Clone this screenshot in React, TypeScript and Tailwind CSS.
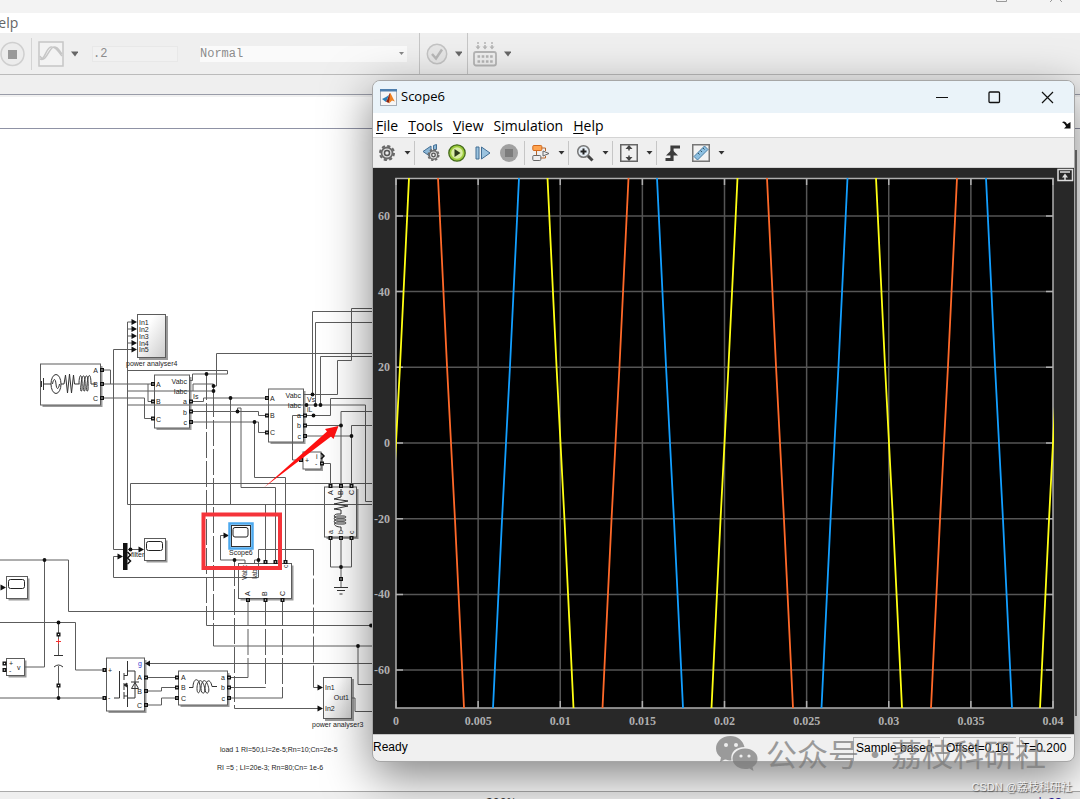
import React from 'react';

type Point = [number, number];

// polylines of the model, in canvas coordinates
const wires: string[] = [
  'M132 322H127.5V504.5H372', 'M127.5 329H132M127.5 336H132M127.5 343H132', 'M132 349.5H113.5V549.5H124',
  'M127.5 370.5H227.5V374H192.5V380.5H190', 'M102 370H110.5V384', 'M102 384H152', 'M148 384V401.5H152',
  'M102 398H144.5V418.5H152', 'M127.5 391H213.5V384H193V391', 'M190 401.5H203.5V398H266',
  'M127.5 405H365.5V501.5H372', 'M190 411.5H258.5V415.5H266', 'M190 422H258.5V432.5H266',
  'M213.5 386H216.5V353.5H372', 'M230.5 398V504.5', 'M237.5 411.5V408H241V487.5H275.5V560',
  'M254.5 422V477.5H285.5V560', 'M304 394.5H337.5V360.5H351.5V308.5H372', 'M312.5 394.5V311.5H372',
  'M315.5 405V322.5H372', 'M320.5 405V356.5H372', 'M304 415.5H330.5V398.5H372', 'M304 425.5H341V411.5H372',
  'M304 436H351.5V425.5H372', 'M341 425.5V486', 'M351.5 436V486', 'M304 415.5H292.5V460H300',
  'M322 463.5H330.5V486', 'M130.5 549.5V483.5H372', 'M265.5 504.5V560', 'M330.5 538V567H351.5V538M341 538V587',
  'M225 535.5H220.5V560H245V564', 'M254.5 564V560H258.5V549.5H313.5', 'M258.5 560V577.5H113.5V556.5H120',
  'M128 549.5H140', 'M0 560H68.5V611.5H372', 'M44.5 560V667H24', 'M0 622.5H75.5V670H104', 'M0 698H104',
  'M58.5 622.5V655M58.5 666V698', 'M150 663.5H372', 'M146 677.5H177', 'M146 691H161.5V687.5H177',
  'M146 705H161.5V698H177', 'M352 698H355V711.5H372', 'M206.5 625.5H372', 'M213.5 646H372', 'M358 646V684.5H372',
  'M234.5 708.5H318', 'M229 677.5H248', 'M229 687.5H265.5', 'M229 698H282.5', 'M313.5 687.5H318',
];

const brokenWires: string[] = [
  'M206.5 374V625.5', 'M213.5 391V646', 'M234.5 560V708.5', 'M313.5 549.5V687.5',
  'M248 600V677.5', 'M265.5 600V687.5', 'M282.5 600V698',
];

const dots: Point[] = [
  [206.5, 374], [213.5, 386], [213.5, 391], [230.5, 398], [237.5, 411.5], [254.5, 422], [312.5, 394.5],
  [306.5, 405], [315.5, 405], [320.5, 405], [313.5, 415.5], [341, 425.5], [351.5, 436], [130.5, 549.5],
  [234.5, 560], [258.5, 560], [44.5, 560], [58.5, 622.5], [58.5, 698], [341, 567], [358, 646], [371, 625.5],
];

const ports: Point[] = [
  [102, 370], [102, 384], [102, 398], [153, 384], [153, 401.5], [153, 418.5],
  [191, 401.5], [191, 411.5], [191, 422], [267, 398], [267, 415.5], [267, 432.5],
  [305, 415.5], [305, 425.5], [305, 436], [301, 460], [322, 463.5],
  [330.5, 486], [341, 486], [351.5, 486], [330.5, 538], [341, 538], [351.5, 538], [341, 579],
  [265.5, 562], [275.5, 562], [285.5, 562], [248, 600], [265.5, 600], [282.5, 600],
  [58.5, 634.5], [58.5, 685.5], [4.5, 663.5], [4.5, 670], [104.5, 670], [104.5, 698],
  [146, 677.5], [146, 691], [146, 705], [177, 677.5], [177, 687.5], [177, 698],
  [229, 677.5], [229, 687.5], [229, 698],
];

const arrows: Point[] = [
  [137, 322], [137, 329], [137, 336], [137, 343], [137, 349.5], [144, 549.5], [123, 556.5],
  [6, 587.5], [229, 535.5], [323, 687.5], [323, 708.5],
];

// x, y, width, height
const blocks: [number, number, number, number][] = [
  [40.5, 364, 60, 41], [154.5, 375, 35, 53], [268.5, 389, 35, 53], [303, 452, 18, 17],
  [324.5, 487, 32, 50], [238.5, 563.5, 53, 35], [144.5, 538.5, 21, 22], [6.5, 576.5, 21, 22],
  [6.5, 658.5, 18, 17], [106.5, 658, 38, 53], [178.5, 671, 49, 34],
];

interface Label {
  x: number;
  y: number;
  text: string;
  end?: boolean;
  vertical?: boolean;
  color?: string;
}

const labels: Label[] = [
  { x: 139, y: 325, text: 'In1' }, { x: 139, y: 332, text: 'In2' }, { x: 139, y: 339, text: 'In3' },
  { x: 139, y: 346, text: 'In4' }, { x: 139, y: 352, text: 'In5' }, { x: 126, y: 366, text: 'power analyser4' },
  { x: 98, y: 373, text: 'A', end: true }, { x: 98, y: 387, text: 'B', end: true }, { x: 98, y: 401, text: 'C', end: true },
  { x: 156, y: 387, text: 'A' }, { x: 156, y: 404, text: 'B' }, { x: 156, y: 422, text: 'C' },
  { x: 187, y: 384, text: 'Vabc', end: true }, { x: 187, y: 394, text: 'Iabc', end: true },
  { x: 187, y: 404, text: 'a', end: true }, { x: 187, y: 415, text: 'b', end: true }, { x: 187, y: 425, text: 'c', end: true },
  { x: 193, y: 399, text: 'Is' },
  { x: 270, y: 401, text: 'A' }, { x: 270, y: 418, text: 'B' }, { x: 270, y: 435, text: 'C' },
  { x: 301, y: 398, text: 'Vabc', end: true }, { x: 301, y: 408, text: 'Iabc', end: true },
  { x: 301, y: 418, text: 'a', end: true }, { x: 301, y: 428, text: 'b', end: true }, { x: 301, y: 439, text: 'c', end: true },
  { x: 307, y: 402, text: 'Vs' }, { x: 307, y: 412, text: 'iL' },
  { x: 305, y: 463, text: '+' }, { x: 316, y: 459, text: 'i' }, { x: 315, y: 466, text: '-' },
  { x: 333, y: 495, text: 'A', vertical: true }, { x: 343, y: 495, text: 'B', vertical: true }, { x: 354, y: 495, text: 'C', vertical: true },
  { x: 333, y: 534, text: 'a', vertical: true }, { x: 343, y: 534, text: 'b', vertical: true }, { x: 354, y: 534, text: 'c', vertical: true },
  { x: 247, y: 580, text: 'Vabc', vertical: true }, { x: 257, y: 579, text: 'Iabc', vertical: true }, { x: 288, y: 568, text: 'c', vertical: true },
  { x: 250, y: 596, text: 'A', vertical: true }, { x: 267, y: 596, text: 'B', vertical: true }, { x: 285, y: 596, text: 'C', vertical: true },
  { x: 229, y: 555, text: 'Scope6' }, { x: 131, y: 557, text: 'filter' },
  { x: 9, y: 666, text: '+' }, { x: 9, y: 673, text: '-' }, { x: 17, y: 670, text: 'v' },
  { x: 108, y: 673, text: '+' }, { x: 108, y: 700, text: '-' }, { x: 142, y: 666, text: 'g', end: true, color: '#3a3ad0' },
  { x: 142, y: 680, text: 'A', end: true }, { x: 142, y: 694, text: 'B', end: true }, { x: 142, y: 708, text: 'C', end: true },
  { x: 181, y: 680, text: 'A' }, { x: 181, y: 690, text: 'B' }, { x: 181, y: 701, text: 'C' },
  { x: 225, y: 680, text: 'a', end: true }, { x: 225, y: 690, text: 'b', end: true }, { x: 225, y: 701, text: 'c', end: true },
  { x: 325, y: 690, text: 'In1' }, { x: 325, y: 711, text: 'In2' }, { x: 349, y: 700, text: 'Out1', end: true },
  { x: 312, y: 727, text: 'power analyser3' },
  { x: 220, y: 752, text: 'load 1 RI=50;LI=2e-5;Rn=10;Cn=2e-5' },
  { x: 217, y: 770, text: 'RI =5 ; LI=20e-3; Rn=80;Cn= 1e-6' },
];

const ModelDiagram = () => (
  <svg
    className="block shrink-0 font-['Liberation_Sans',sans-serif] text-[7px]"
    width="372" height="661" viewBox="0 130 372 661" fill="none" stroke="#5c5c5c"
    role="img" aria-label="Simulink model"
  >
    <defs>
      <linearGradient id="sub" x1="0" y1="0" x2="1" y2="1">
        <stop offset="0.3" stopColor="#fff" />
        <stop offset="1" stopColor="#ccc" />
      </linearGradient>
    </defs>
    <g fill="#9a9a9a" stroke="none">
      {blocks.map(([x, y, w, h]) => <rect key={`${x}-${y}`} x={x + 2} y={y + 2} width={w} height={h} />)}
      <rect x="139" y="316" width="29" height="44" />
      <rect x="325" y="679" width="29" height="42" />
    </g>
    <g fill="#fff">
      {blocks.map(([x, y, w, h]) => <rect key={`${x}-${y}`} x={x} y={y} width={w} height={h} />)}
    </g>
    <rect x="137.5" y="314.5" width="28" height="43" fill="url(#sub)" />
    <rect x="323.5" y="677.5" width="28" height="41" fill="url(#sub)" />

    {wires.map(d => <path key={d} d={d} />)}
    {brokenWires.map(d => <path key={d} d={d} strokeDasharray="26 3" />)}
    <g fill="#111" stroke="none">
      {dots.map(([x, y]) => <circle key={`${x}-${y}`} cx={x} cy={y} r="1.9" />)}
      {arrows.map(([x, y]) => <path key={`${x}-${y}`} d={`M${x} ${y}l-5.5 -3v6z`} />)}
      <path d="M145 663.5l5 -3v6z" />
      <rect x="123" y="543" width="4.5" height="27" />
    </g>
    <g fill="#fff" stroke="#111" strokeWidth="1.4">
      {ports.map(([x, y]) => <rect key={`${x}-${y}`} x={x - 1.3} y={y - 1.3} width="2.6" height="2.6" />)}
    </g>

    {/* three-phase source */}
    <g stroke="#333">
      <path d="M41.5 381v6M43.5 378v12M43.5 384H51" />
      <ellipse cx="56" cy="384" rx="5" ry="9.5" />
      <path d="M52.5 384c1 -6 3 -6 3.5 0s2.5 6 3.5 0M61 384h3l1.5 -9 2 18 2 -19 2 19 2 -18 1 9h5" />
      <path d="M79 384c0 -12 4 -12 3 6c-1 3 -2 0 -1 -5c1 -13 5 -13 4 5c-1 3 -2 0 -1 -5c1 -13 5 -13 4 5c-1 3 -2 0 -1 -5c1 -13 4 -12 4 -1h5" />
    </g>
    {/* series RL load */}
    <path stroke="#333" d="M341 489v8l-7 2 14 2 -14 3 14 2 -14 3 7 1v4h-3c-5 0 -5 4 0 4h5c4 0 4 -2 0 -2h-5c-5 0 -5 5 0 5h5c4 0 4 -2 0 -2h-5c-5 0 -5 5 0 5h5c4 0 4 -2 0 -2h-5c-5 0 -5 5 3 5v4" />
    <path stroke="#333" d="M334 587.5h14M337 590.5h8M339.5 594h3" />
    {/* capacitor */}
    <path stroke="#333" d="M54 655.5h9M54 667q4.5 -4 9 0" />
    <path stroke="#e33" d="M56 641.5h5M58.5 639v5" />
    {/* bridge */}
    <g stroke="#333">
      <path d="M114 698h5.5V671M124 673v7M124 683v7M124 692v7M124 675.5h3.5V661M124 685h3.5V697M124 696h3.5v11M127.5 671h7.5v27h-7.5M131.5 688.5h7l-3.5 -6zM131 682h8" />
      <path fill="#111" d="M124 685l3 -2v4z" />
    </g>
    {/* filter inductor */}
    <path stroke="#333" d="M189 687.5h4c0 -10 6 -10 7 -2s-3 10 -3 3s4 -12 7 -3s-3 10 -3 3s4 -12 7 -3s-3 10 -3 3s5 -12 7 -2h5" />
    <path stroke="#111" strokeWidth="1.5" d="M127.5 552l3 3 -3 3 3 3 -3 3M321 453l3 3 -3 3" />
    <rect x="8.5" y="579.5" width="16" height="9" rx="2" stroke="#222" />
    <rect x="146.5" y="541.5" width="16" height="9" rx="2" stroke="#222" />
    <rect x="229.5" y="523.5" width="23" height="25" fill="#fff" stroke="#4da9ee" strokeWidth="2.5" />
    <rect x="231.5" y="525.5" width="19" height="21" stroke="#333" />
    <rect x="233" y="527.5" width="15" height="9.5" rx="2" stroke="#222" />

    {labels.map(l => (
      <text
        key={`${l.text}-${l.x}-${l.y}`} x={l.x} y={l.y} fill={l.color || '#1c1c1c'} stroke="none"
        textAnchor={l.end ? 'end' : 'start'} transform={l.vertical ? `rotate(-90 ${l.x} ${l.y})` : undefined}
      >
        {l.text}
      </text>
    ))}

    <rect x="203.5" y="514.5" width="76.5" height="53.5" stroke="#f5343a" strokeWidth="4" />
    <path fill="#fe1010" stroke="none" d="M264 487.5L327 431.5L325 429L338.5 426L333.5 439L331 436.5Z" />
  </svg>
);

const plotLeft = 396;
const plotRight = 1053;
const zeroY = 443;
const xStep = (plotRight - plotLeft) / 8;
const yStep = 75.7;
const xTicks = ['0', '0.005', '0.01', '0.015', '0.02', '0.025', '0.03', '0.035', '0.04'];
const yTicks = [60, 40, 20, 0, -20, -40, -60];

// zero crossings of every phase inside the visible window
const traces = [
  { color: '#ffff13', rising: [396, 724.5, 1053], falling: [560.5, 889] },
  { color: '#139fff', rising: [506, 834.5], falling: [670, 999] },
  { color: '#ff6929', rising: [615.5, 944], falling: [451, 780] },
];

const ScopePlot = () => (
  <svg className="block w-full h-auto" viewBox="373 168 701 566" role="img" aria-label="Scope6 signals">
    <defs>
      <clipPath id="axes">
        <rect x={plotLeft} y="178" width={plotRight - plotLeft + 1} height="530" />
      </clipPath>
    </defs>
    <rect x="373" y="168" width="701" height="566" fill="#282828" />
    <rect x={plotLeft} y="178.5" width={plotRight - plotLeft} height="529.5" fill="#000" />
    <g stroke="#555" strokeWidth="1.5">
      {xTicks.slice(1, -1).map((t, i) => <path key={t} d={`M${plotLeft + xStep * (i + 1)} 178V708`} />)}
      {yTicks.map(t => <path key={t} d={`M${plotLeft} ${zeroY - (t / 20) * yStep}H${plotRight}`} />)}
    </g>
    <g stroke="#afafaf" strokeWidth="1.5" fill="none">
      <rect x={plotLeft} y="178.5" width={plotRight - plotLeft} height="529.5" />
      {xTicks.map((t, i) => <path key={t} d={`M${plotLeft + xStep * i} 178v7M${plotLeft + xStep * i} 708v-7`} />)}
      {yTicks.map(t => {
        const y = zeroY - (t / 20) * yStep;
        return <path key={t} d={`M${plotLeft} ${y}h7M${plotRight} ${y}h-7`} />;
      })}
    </g>
    <g clipPath="url(#axes)" fill="none" strokeWidth="1.8">
      {traces.map(t => (
        <g key={t.color} stroke={t.color}>
          {t.rising.map(x => <path key={x} d={`M${x - 13} 708L${x - 4} 520L${x + 4} 366L${x + 13} 178`} />)}
          {t.falling.map(x => <path key={x} d={`M${x - 13} 178L${x - 4} 366L${x + 4} 520L${x + 13} 708`} />)}
        </g>
      ))}
    </g>
    <g className="font-['Liberation_Serif',serif] text-[12px] font-bold" fill="#afafaf">
      {xTicks.map((t, i) => <text key={t} x={plotLeft + xStep * i} y="725" textAnchor="middle">{t}</text>)}
      {yTicks.map(t => <text key={t} x="390" y={zeroY - (t / 20) * yStep + 4} textAnchor="end">{t}</text>)}
    </g>
    <g stroke="#ddd" strokeWidth="1.5" fill="none">
      <rect x="1058" y="169.5" width="14.5" height="11" />
      <path d="M1060 172h10M1065 180v-4" />
      <path d="M1062 177.5l3 -4 3 4z" fill="#ddd" stroke="none" />
    </g>
  </svg>
);

const Caret = ({ label, wide }: { label: string; wide?: boolean }) => (
  <button aria-label={label} className={wide ? 'w-[7px] ml-[7px] shrink-0' : 'w-[7px] ml-2 shrink-0'}>
    <svg className="block" width="7" height="6" viewBox="0 0 7 6">
      <path d={wide ? 'M0 0.5h7.5L4 5.5z' : 'M0.5 1h6L3.5 4.5z'} fill={wide ? '#666' : '#333'} />
    </svg>
  </button>
);

const Sep = () => <div className="w-px h-6 ml-[3px] mr-[7px] bg-[#c6c6c6] shrink-0" />;

const Tool = ({ label, children }: { label: string; children: React.ReactNode }) => (
  <button aria-label={label} className="w-[18px] h-[18px] shrink-0">
    <svg className="block" width="18" height="18" viewBox="0 0 18 18" fill="none">{children}</svg>
  </button>
);

const ScopeToolbar = () => (
  <div className="flex items-center h-[31px] pl-[5px] bg-[#efefef] border-y border-[#d4d4d4] overflow-hidden">
    <Tool label="Configuration properties">
      <circle cx="9" cy="9" r="7" stroke="#6a6a6a" strokeWidth="2" strokeDasharray="3.2 2.3" />
      <circle cx="9" cy="9" r="5.5" fill="#ddd" stroke="#6a6a6a" strokeWidth="1.8" />
      <circle cx="9" cy="9" r="2.5" fill="#eee" stroke="#555" strokeWidth="1.5" />
    </Tool>
    <Caret label="Configuration options" />
    <Sep />
    <div className="flex gap-2">
      <Tool label="Step back options">
        <path d="M1 7.5L9 2v11z" fill="#8db7d6" stroke="#426e94" />
        <path d="M11.5 1.5l3 -1v5h-3z" fill="#8db7d6" stroke="#426e94" />
        <circle cx="11.5" cy="11" r="5.3" stroke="#6a6a6a" strokeWidth="1.6" strokeDasharray="2.4 1.7" />
        <circle cx="11.500" cy="11" r="4.2" fill="#ddd" stroke="#6a6a6a" strokeWidth="1.4" />
        <circle cx="11.5" cy="11" r="1.8" fill="#eee" stroke="#555" strokeWidth="1.3" />
      </Tool>
      <Tool label="Run">
        <circle cx="9" cy="9" r="8.2" fill="#9ccb3b" stroke="#456b1d" strokeWidth="1.3" />
        <circle cx="9" cy="9" r="5.8" fill="#d9eda4" />
        <path d="M6.5 5v8l6 -4z" fill="#2d3b1b" />
      </Tool>
      <Tool label="Step forward">
        <path d="M2 3h3v12H2z" fill="#9bc3df" stroke="#426e94" />
        <path d="M7.5 3v12L16 9z" fill="#9bc3df" stroke="#426e94" />
      </Tool>
      <Tool label="Stop">
        <circle cx="9" cy="9" r="9" fill="#a0a0a0" />
        <rect x="5" y="5" width="8" height="8" fill="#7c7c7c" />
      </Tool>
    </div>
    <div className="pl-[3px]"><Sep /></div>
    <Tool label="Highlight Simulink block">
      <path d="M4.5 6v6M10 4h3.500v3M9 14h4.500v-2" stroke="#b5652b" />
      <rect x="0.8" y="1.5" width="9" height="5" rx="1" fill="#ffa44f" stroke="#d2691e" />
      <rect x="0.8" y="11.5" width="8" height="5" rx="1" fill="#eee" stroke="#666" />
      <path d="M11 7l6 2.5 -6 2.5z" fill="#eee" stroke="#666" />
    </Tool>
    <Caret label="Highlight options" />
    <Sep />
    <Tool label="Zoom">
      <path d="M11.5 11.5L16.5 16.5" stroke="#444" strokeWidth="3" />
      <circle cx="7.5" cy="7.5" r="5.8" fill="#e5edf4" stroke="#777" strokeWidth="1.5" />
      <path d="M4.5 7.5h6M7.5 4.5v6" stroke="#222" strokeWidth="2" />
    </Tool>
    <Caret label="Zoom options" />
    <Sep />
    <Tool label="Scale axes">
      <rect x="0.75" y="0.75" width="16.5" height="16.5" fill="#f0f0f0" stroke="#666" strokeWidth="1.5" />
      <path d="M9 1l3.5 4h-7zM9 17l3.5 -4h-7z" fill="#444" />
      <path d="M9 4v2.5M9 11.500v2.500" stroke="#444" strokeWidth="1.5" />
    </Tool>
    <Caret label="Scale options" />
    <Sep />
    <Tool label="Triggers">
      <path d="M1.500 15.5h6.500V3H16" stroke="#3c3c3c" strokeWidth="3.2" />
      <path d="M2 11.500h12L8 5.5z" fill="#3c3c3c" />
    </Tool>
    <div className="w-[10px] shrink-0" />
    <Tool label="Cursor measurements">
      <rect x="0.75" y="0.75" width="16.5" height="16.5" fill="#f2f2f2" stroke="#777" strokeWidth="1.5" />
      <path d="M2 12.5L12.5 2l3.5 3.5L5.5 16z" fill="#8dbfe0" stroke="#4a7fa5" />
      <path d="M6 9l1.5 1.5M8.5 6.5L10 8M11 4l1.5 1.5" stroke="#356" />
    </Tool>
    <Caret label="Measurement options" />
  </div>
);

const scopeMenu = [
  { before: '', key: 'F', after: 'ile' },
  { before: '', key: 'T', after: 'ools' },
  { before: '', key: 'V', after: 'iew' },
  { before: 'S', key: 'i', after: 'mulation' },
  { before: '', key: 'H', after: 'elp' },
];

const ScopeWindow = () => (
  <section className="absolute top-20 left-[372px] right-[5px] rounded-lg border border-[#a6a6a6] overflow-hidden shadow-[0_14px_48px_rgba(0,0,0,0.5)] bg-[#f0f0f0] text-black">
    <header className="flex items-center h-8 pl-[7px] pr-5 bg-[#eaf3f9] font-['Open_Sans',sans-serif]">
      <svg width="17" height="17" viewBox="0 0 17 17" className="shrink-0">
        <rect x="0.5" y="0.5" width="16" height="16" fill="#f6f6f6" stroke="#a5aeb8" />
        <path d="M0 0h17v2.5H0z" fill="#4e7fae" />
        <path d="M2 10l4 -2 3 -2 -3 7z" fill="#2c7fb8" />
        <path d="M6 12.5c2 -2 3 -8 4 -8.5l1.5 4 -3 6z" fill="#8e2411" />
        <path d="M10 4c1.5 1 3 6 5 8.5l-3 -1 -3 3z" fill="#ee8022" />
      </svg>
      <h1 className="ml-1 text-[13px]">Scope6</h1>
      <div className="flex gap-10 ml-auto">
        <button aria-label="Minimize"><svg className="block" width="13" height="13" stroke="#111"><path d="M1 6.5h12" /></svg></button>
        <button aria-label="Maximize"><svg className="block" width="13" height="13" fill="none" stroke="#111" strokeWidth="1.3"><rect x="1" y="1" width="10.5" height="10.5" rx="1" /></svg></button>
        <button aria-label="Close"><svg className="block" width="13" height="13" stroke="#111" strokeWidth="1.2"><path d="M1 1l11 11M12 1L1 12" /></svg></button>
      </div>
    </header>
    <nav className="flex items-center gap-[10px] h-6 px-[3px] bg-white font-['Open_Sans',sans-serif] text-[14px]">
      {scopeMenu.map(m => (
        <button key={m.key}>{m.before}<span className="underline underline-offset-2">{m.key}</span>{m.after}</button>
      ))}
      <button aria-label="Dock" className="ml-auto">
        <svg className="block" width="9" height="8" viewBox="0 0 9 8"><path d="M0 1.2c2 -1.500 4 -0.500 5 2L8.500 1v6.500H2l2 -2C3.500 3.500 2 2 0 1.200z" fill="#111" /></svg>
      </button>
    </nav>
    <ScopeToolbar />
    <ScopePlot />
    <footer className="flex items-end gap-[3px] h-[27px] pr-[3px] border-t border-[#c4c4c4] font-['Liberation_Sans',sans-serif] text-[12px] leading-[21px]">
      <span className="mr-auto h-6">Ready</span>
      <span className="px-[2px] w-[87px] h-6 border-t border-l border-[#b2b2b2]">Sample based</span>
      <span className="px-[2px] w-[73px] h-6 border-t border-l border-[#b2b2b2] whitespace-nowrap">Offset=0.16</span>
      <span className="px-[2px] w-[52px] h-6 border-t border-l border-[#b2b2b2] whitespace-nowrap">T=0.200</span>
    </footer>
  </section>
);

const ModelToolbar = () => (
  <div className="flex items-center shrink-0 h-[42px] bg-[#efefef] border-b border-[#bbb]">
    <button aria-label="Stop" className="shrink-0">
      <svg className="block" width="25" height="26" viewBox="0 0 25 26">
        <circle cx="12.5" cy="13" r="11.5" fill="#ececec" stroke="#cfcfcf" strokeWidth="1.5" />
        <rect x="8" y="9" width="9" height="9" fill="#999" />
      </svg>
    </button>
    <div className="w-px h-8 mx-[6px] bg-[#d4d4d4] shrink-0" />
    <button aria-label="Data inspector" className="shrink-0">
      <svg className="block" width="26" height="26" viewBox="0 0 26 26" fill="none" stroke="#c6c6c6">
        <rect x="1" y="1" width="24" height="24" fill="#f3f3f3" strokeWidth="1.5" />
        <path d="M2 15c4 8 6 -9 11 -9s6 3 11 9M2 18c7 3 9 -12 14 -12s5 4 8 7" strokeWidth="1.5" />
      </svg>
    </button>
    <Caret label="Data inspector options" wide />
    <input aria-label="Stop time" defaultValue=".2" className="w-[86px] h-4 ml-[14px] shrink-0 bg-[#f1f1f1] border border-[#e8e8e8] text-[#8c8c8c] text-[12px] font-['Liberation_Mono',monospace]" />
    <div className="relative ml-[22px] w-[207px] h-4 shrink-0">
      <select aria-label="Simulation mode" className="block appearance-none w-full h-full bg-[#fafafa] text-[#8c8c8c] text-[12px] leading-4 font-['Liberation_Mono',monospace]">
        <option>Normal</option>
      </select>
      <svg className="absolute right-[3px] top-[6px] pointer-events-none" width="5" height="4"><path d="M0 0h5L2.5 3z" fill="#888" /></svg>
    </div>
    <div className="w-px h-full ml-3 mr-[6px] bg-[#c6c6c6] shrink-0" />
    <button aria-label="Update diagram" className="shrink-0">
      <svg className="block" width="22" height="22" viewBox="0 0 22 22" fill="none">
        <circle cx="11" cy="11" r="9.7" fill="#e6e6e6" stroke="#c4c4c4" strokeWidth="1.5" />
        <path d="M6 11l4 4.5 6 -9" stroke="#b8b8b8" strokeWidth="2.5" />
      </svg>
    </button>
    <Caret label="Update options" wide />
    <div className="w-px h-full mx-[5px] bg-[#c6c6c6] shrink-0" />
    <button aria-label="Build model" className="shrink-0">
      <svg className="block" width="24" height="26" viewBox="0 0 24 26" fill="none" stroke="#b5b5b5">
        <rect x="1" y="11" width="22" height="13.5" rx="2" strokeWidth="1.8" />
        <path d="M4.5 15.5h16M4.5 20.5h16" strokeWidth="2.6" strokeDasharray="2.6 1.6" />
        <path d="M5 1v6M12 1v6M19 1v6" strokeWidth="1.5" strokeDasharray="2 1" />
        <path d="M2.5 5.5h5L5 8.500zM9.5 5.5h5L12 8.500zM16.5 5.5h5L19 8.500z" fill="#b5b5b5" stroke="none" />
      </svg>
    </button>
    <Caret label="Build options" wide />
  </div>
);

const Watermark = () => (
  <div className="absolute right-[34px] top-[730px] flex items-center gap-2 text-[#777] opacity-70 pointer-events-none font-['Noto_Sans_CJK_SC',sans-serif]">
    <svg width="43" height="35" viewBox="0 0 43 35" fill="#777">
      <path d="M15.5 0C6.5 0 1 6 1 12.5c0 4 2 7 5 9L5 26l5 -2.5c2 0.5 4 1 6.5 1C15 16 21 11 29.5 11C28 4.5 22.5 0 15.5 0z" />
      <path d="M30 12.5c-7 0 -12.5 4.5 -12.5 10s5.5 10.5 12.5 10.5c1.5 0 3 0 4.5 -0.5L38.5 35l-1 -4c3.5 -2 5 -5 5 -8.5c0 -5.5 -5.5 -10 -12.5 -10z" />
      <g fill="#eee"><circle cx="11" cy="9" r="2" /><circle cx="21" cy="9" r="2" /><circle cx="26" cy="20" r="1.6" /><circle cx="34" cy="20" r="1.6" /></g>
    </svg>
    <p className="flex text-[31px] leading-[46px] whitespace-nowrap">
      <span>公众号</span>
      <span className="w-8 text-center">·</span>
      <span>荔枝科研社</span>
    </p>
  </div>
);

const App: React.FC = () => {
  return (
    <main className="relative flex flex-col h-screen overflow-hidden bg-white font-['Open_Sans',sans-serif]">
      <div className="flex justify-end items-start gap-[42px] shrink-0 h-[13px] pr-[18px] bg-[#f3f3f3]">
        <svg width="12" height="3" fill="none" stroke="#999"><path d="M0.5 0v1.500h10V0" /></svg>
        <svg width="12" height="3" stroke="#999"><path d="M2 0L0 2M10 0l2 2" /></svg>
      </div>
      <nav className="flex items-center shrink-0 h-5 bg-white text-[14px] leading-5 text-[#666]">
        <button className="-ml-3">Help</button>
      </nav>
      <ModelToolbar />
      <div className="shrink-0 h-5 bg-[#efefef] border-b border-[#999ca8]" />
      <div className="shrink-0 h-[33px] bg-white border-t-2 border-[#f1f1f1]" />
      <div className="shrink-0 h-px bg-[#8f92a5]" />
      <div className="flex justify-between shrink-0 pt-px">
        <ModelDiagram />
        <div className="w-[2px] mt-5 mb-[75px] mr-[3px] bg-[#777]" />
      </div>
      <footer className="flex shrink-0 pl-[486px] pr-[18px] border-t border-[#aaa] bg-[#efefef] text-[12px] leading-[22px]">
        <span className="text-[#333]">200%</span>
        <a href="#solver" className="ml-auto text-[#2a1a9a]">de23</a>
      </footer>
      <ScopeWindow />
      <Watermark />
      <p className="absolute right-2 top-[779px] text-[11px] leading-4 text-[#eee] pointer-events-none font-['Liberation_Sans','Noto_Sans_CJK_SC',sans-serif] [text-shadow:1px_1px_1px_#555]">
        CSDN @荔枝科研社
      </p>
    </main>
  );
};

export default App;
